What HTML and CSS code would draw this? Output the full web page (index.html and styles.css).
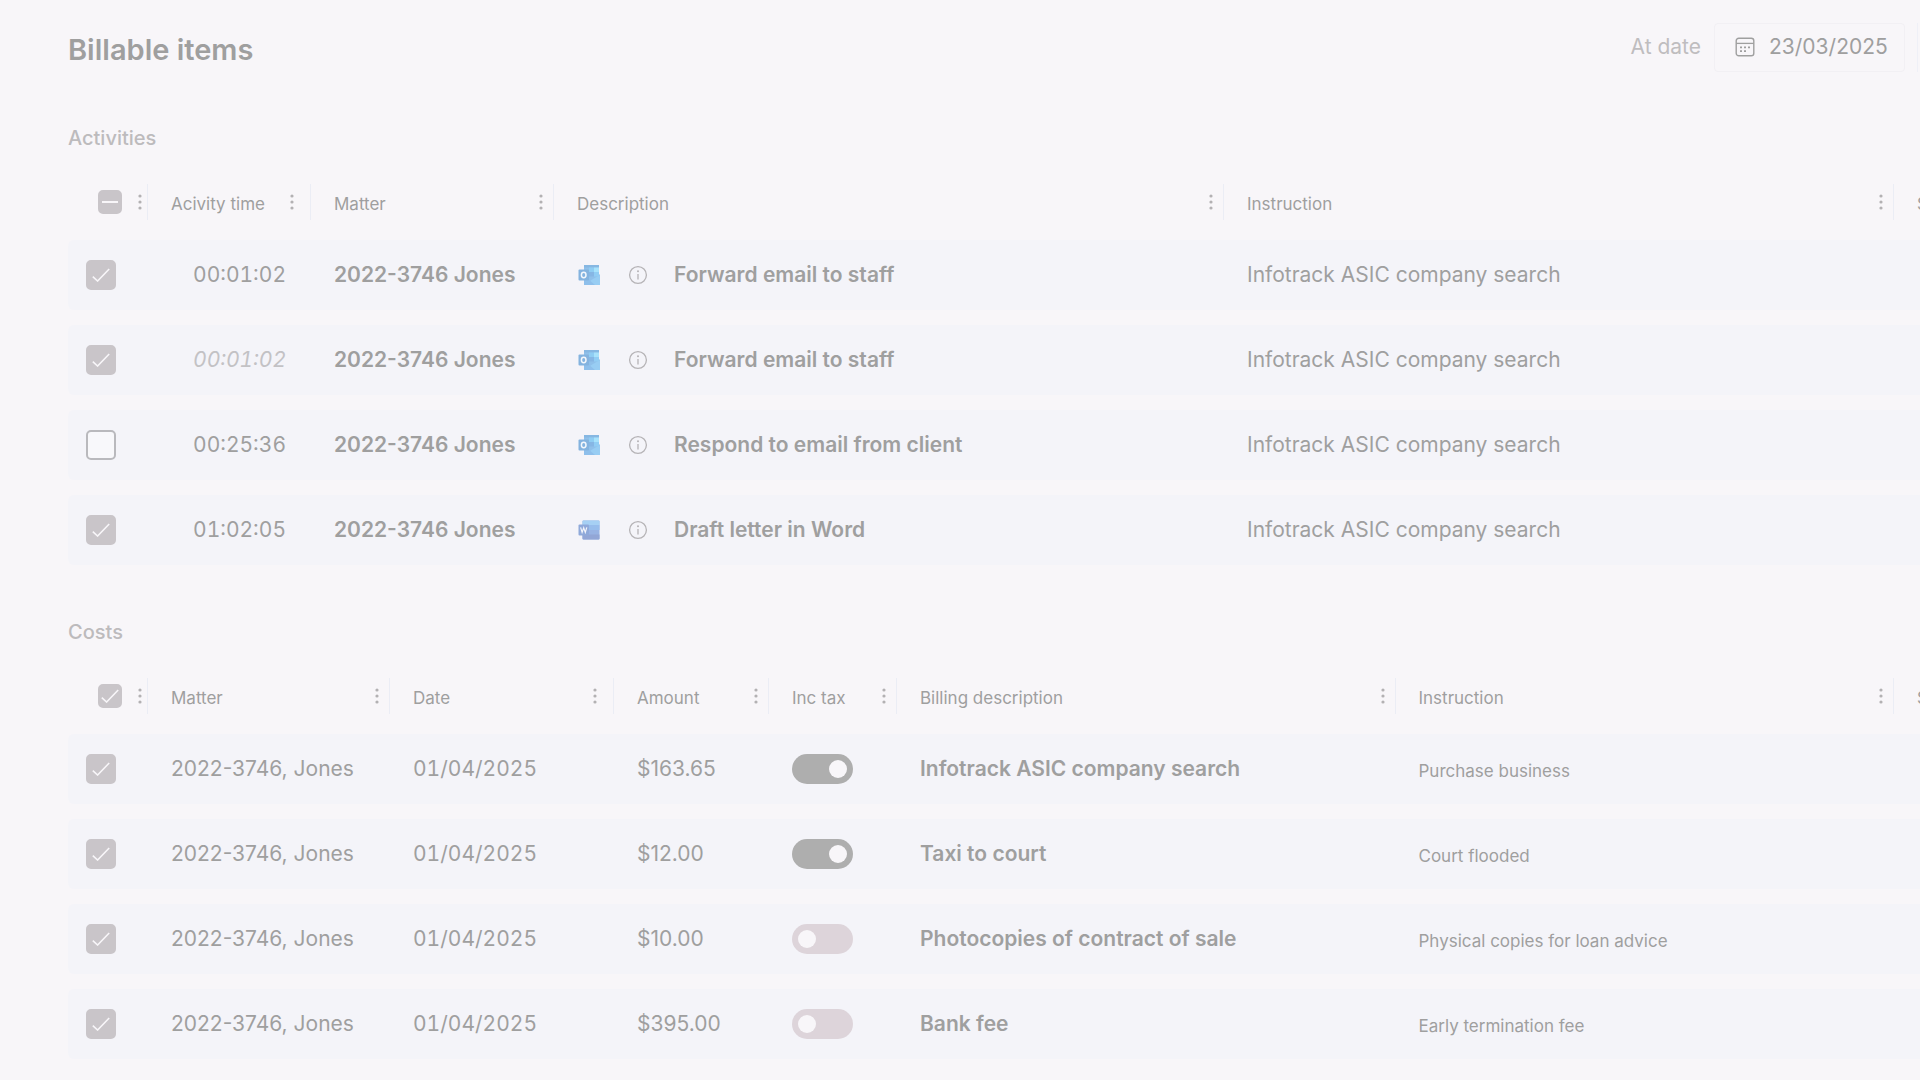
FILE: index.html
```html
<!DOCTYPE html>
<html lang="en">
<head>
    <meta charset="UTF-8">
    <meta name="viewport" content="width=device-width, initial-scale=1.0">
    <title>Billable items</title>
    <link rel="stylesheet" href="styles.css">
</head>
<body>
    <!-- Shared icons -->
    <svg class="sprite" aria-hidden="true">
        <symbol id="icon-kebab" viewBox="0 0 8 18">
            <circle cx="4" cy="3" r="1.6" fill="currentColor"/>
            <circle cx="4" cy="9" r="1.6" fill="currentColor"/>
            <circle cx="4" cy="15" r="1.6" fill="currentColor"/>
        </symbol>
        <symbol id="icon-info" viewBox="0 0 20 20">
            <circle cx="10" cy="10" r="8.4" fill="none" stroke="currentColor" stroke-width="1.3"/>
            <circle cx="10" cy="6.2" r="1" fill="currentColor"/>
            <path d="M10 9v5.4" stroke="currentColor" stroke-width="1.3"/>
        </symbol>
        <symbol id="icon-outlook" viewBox="0 0 22 20">
            <path d="M6 0h15v9l1 1v10H6z" fill="#8fc0ea"/>
            <path d="M6 0h15v2.5H6z" fill="#86b7e2"/>
            <path d="M11 2.5h5v4.5h-5z" fill="#8fcdf3"/>
            <path d="M16 2.5h5v4.5h-5z" fill="#a8e2fb"/>
            <path d="M11 7h5v4.5h-5z" fill="#86b6e4"/>
            <path d="M16 7h5v4.5h-5z" fill="#91cdf4"/>
            <path d="M22 10v10H6l9-6z" fill="#98cdf3"/>
            <path d="M6 10.5l11 9.5H6z" fill="#8ebfeb"/>
            <rect x="0.5" y="4.5" width="10.5" height="11" rx="1" fill="#84b3df"/>
            <ellipse cx="5.7" cy="10" rx="2.3" ry="2.7" fill="none" stroke="#f3f7fc" stroke-width="1.5"/>
        </symbol>
        <symbol id="icon-word" viewBox="0 0 22 20">
            <rect x="4.5" y="0.5" width="17" height="19" rx="1" fill="#98b3e3"/>
            <path d="M4.5 1.5a1 1 0 0 1 1-1h15a1 1 0 0 1 1 1V5h-17z" fill="#a6d0f4"/>
            <path d="M4.5 5h17v5h-17z" fill="#97bdec"/>
            <path d="M4.5 14.5h17v4a1 1 0 0 1-1 1h-15a1 1 0 0 1-1-1z" fill="#92a6d6"/>
            <rect x="0.5" y="4.5" width="10.5" height="11" rx="1" fill="#8fa9da"/>
            <path d="M2.6 7.4l1.5 5 1.6-4.6 1.6 4.6 1.5-5" fill="none" stroke="#f3f5fb" stroke-width="1.2"/>
        </symbol>
    </svg>

    <main class="page">
        <header class="page-header">
            <h1 class="page-title">Billable items</h1>
            <div class="toolbar">
                <label class="date-label" for="at-date">At date</label>
                <div class="date-field">
                    <svg class="icon-calendar" viewBox="0 0 20 20" aria-hidden="true">
                        <rect x="1.2" y="1.2" width="17.6" height="17.6" rx="2.6" fill="none" stroke="currentColor" stroke-width="1.4"/>
                        <path d="M1.2 6.4h17.6" stroke="currentColor" stroke-width="1.3"/>
                        <path d="M5 10.3h2M9 10.3h2M13 10.3h2M5 14.2h2M9 14.2h2" stroke="currentColor" stroke-width="1.8"/>
                    </svg>
                    <input class="date-input" id="at-date" type="text" value="23/03/2025">
                </div>
                <div class="toolbar-next"></div>
            </div>
        </header>

        <section>
            <h2 class="section-title">Activities</h2>
            <table class="grid">
                <colgroup>
                    <col class="w-select">
                    <col class="w-time">
                    <col class="w-act-matter">
                    <col>
                    <col>
                    <col class="w-last">
                </colgroup>
                <thead>
                    <tr>
                        <th><div class="head head-select"><input class="check check-small check-mixed" type="checkbox" aria-label="Select all activities"><button class="kebab" aria-label="Column menu"><svg><use href="#icon-kebab"/></svg></button></div></th>
                        <th><div class="head head-wide">Acivity time<button class="kebab" aria-label="Column menu"><svg><use href="#icon-kebab"/></svg></button></div></th>
                        <th><div class="head">Matter<button class="kebab" aria-label="Column menu"><svg><use href="#icon-kebab"/></svg></button></div></th>
                        <th><div class="head">Description<button class="kebab" aria-label="Column menu"><svg><use href="#icon-kebab"/></svg></button></div></th>
                        <th><div class="head">Instruction<button class="kebab" aria-label="Column menu"><svg><use href="#icon-kebab"/></svg></button></div></th>
                        <th><div class="head head-last">S</div></th>
                    </tr>
                </thead>
                <tbody>
                    <tr>
                        <td class="select"><input class="check" type="checkbox" aria-label="Select row" checked></td>
                        <td class="time">00:01:02</td>
                        <td class="strong">2022-3746 Jones</td>
                        <td class="strong"><div class="desc"><svg class="icon-app"><use href="#icon-outlook"/></svg><svg class="icon-info"><use href="#icon-info"/></svg>Forward email to staff</div></td>
                        <td>Infotrack ASIC company search</td>
                        <td></td>
                    </tr>
                    <tr>
                        <td class="select"><input class="check" type="checkbox" aria-label="Select row" checked></td>
                        <td class="time estimated">00:01:02</td>
                        <td class="strong">2022-3746 Jones</td>
                        <td class="strong"><div class="desc"><svg class="icon-app"><use href="#icon-outlook"/></svg><svg class="icon-info"><use href="#icon-info"/></svg>Forward email to staff</div></td>
                        <td>Infotrack ASIC company search</td>
                        <td></td>
                    </tr>
                    <tr>
                        <td class="select"><input class="check" type="checkbox" aria-label="Select row"></td>
                        <td class="time">00:25:36</td>
                        <td class="strong">2022-3746 Jones</td>
                        <td class="strong"><div class="desc"><svg class="icon-app"><use href="#icon-outlook"/></svg><svg class="icon-info"><use href="#icon-info"/></svg>Respond to email from client</div></td>
                        <td>Infotrack ASIC company search</td>
                        <td></td>
                    </tr>
                    <tr>
                        <td class="select"><input class="check" type="checkbox" aria-label="Select row" checked></td>
                        <td class="time">01:02:05</td>
                        <td class="strong">2022-3746 Jones</td>
                        <td class="strong"><div class="desc"><svg class="icon-app"><use href="#icon-word"/></svg><svg class="icon-info"><use href="#icon-info"/></svg>Draft letter in Word</div></td>
                        <td>Infotrack ASIC company search</td>
                        <td></td>
                    </tr>
                </tbody>
            </table>
        </section>

        <section>
            <h2 class="section-title">Costs</h2>
            <table class="grid">
                <colgroup>
                    <col class="w-select">
                    <col class="w-cost-matter">
                    <col class="w-date">
                    <col class="w-amount">
                    <col class="w-tax">
                    <col>
                    <col>
                    <col class="w-last">
                </colgroup>
                <thead>
                    <tr>
                        <th><div class="head head-select"><input class="check check-small" type="checkbox" aria-label="Select all costs" checked><button class="kebab" aria-label="Column menu"><svg><use href="#icon-kebab"/></svg></button></div></th>
                        <th><div class="head">Matter<button class="kebab" aria-label="Column menu"><svg><use href="#icon-kebab"/></svg></button></div></th>
                        <th><div class="head head-wide">Date<button class="kebab" aria-label="Column menu"><svg><use href="#icon-kebab"/></svg></button></div></th>
                        <th><div class="head">Amount<button class="kebab" aria-label="Column menu"><svg><use href="#icon-kebab"/></svg></button></div></th>
                        <th><div class="head">Inc tax<button class="kebab" aria-label="Column menu"><svg><use href="#icon-kebab"/></svg></button></div></th>
                        <th><div class="head">Billing description<button class="kebab" aria-label="Column menu"><svg><use href="#icon-kebab"/></svg></button></div></th>
                        <th><div class="head">Instruction<button class="kebab" aria-label="Column menu"><svg><use href="#icon-kebab"/></svg></button></div></th>
                        <th><div class="head head-last">S</div></th>
                    </tr>
                </thead>
                <tbody>
                    <tr>
                        <td class="select"><input class="check" type="checkbox" aria-label="Select row" checked></td>
                        <td>2022-3746, Jones</td>
                        <td class="date">01/04/2025</td>
                        <td>$163.65</td>
                        <td><input class="toggle" type="checkbox" aria-label="Inc tax" checked></td>
                        <td class="strong">Infotrack ASIC company search</td>
                        <td class="note">Purchase business</td>
                        <td></td>
                    </tr>
                    <tr>
                        <td class="select"><input class="check" type="checkbox" aria-label="Select row" checked></td>
                        <td>2022-3746, Jones</td>
                        <td class="date">01/04/2025</td>
                        <td>$12.00</td>
                        <td><input class="toggle" type="checkbox" aria-label="Inc tax" checked></td>
                        <td class="strong">Taxi to court</td>
                        <td class="note">Court flooded</td>
                        <td></td>
                    </tr>
                    <tr>
                        <td class="select"><input class="check" type="checkbox" aria-label="Select row" checked></td>
                        <td>2022-3746, Jones</td>
                        <td class="date">01/04/2025</td>
                        <td>$10.00</td>
                        <td><input class="toggle" type="checkbox" aria-label="Inc tax"></td>
                        <td class="strong">Photocopies of contract of sale</td>
                        <td class="note">Physical copies for loan advice</td>
                        <td></td>
                    </tr>
                    <tr>
                        <td class="select"><input class="check" type="checkbox" aria-label="Select row" checked></td>
                        <td>2022-3746, Jones</td>
                        <td class="date">01/04/2025</td>
                        <td>$395.00</td>
                        <td><input class="toggle" type="checkbox" aria-label="Inc tax"></td>
                        <td class="strong">Bank fee</td>
                        <td class="note">Early termination fee</td>
                        <td></td>
                    </tr>
                </tbody>
            </table>
        </section>
    </main>
</body>
</html>
```
FILE: styles.css
```css
* {
    box-sizing: border-box;
}

body {
    margin: 0;
    background: #f8f6f9;
    color: #9f9f9f;
    font-family: Inter, "Liberation Sans", sans-serif;
    font-size: 21px;
    line-height: 28px;
}

.sprite {
    display: none;
}

.page {
    padding-left: 68px;
    overflow: hidden;
}

/* Page header */
.page-header {
    display: flex;
    align-items: center;
    justify-content: space-between;
    height: 86px;
    padding-top: 8px;
}

.page-title {
    margin: 0;
    padding-top: 5px;
    font-size: 29px;
    font-weight: 600;
    line-height: 36px;
}

.toolbar {
    display: flex;
    align-items: center;
}

.date-label {
    margin-right: 13px;
    color: #bfbdbf;
}

.date-field {
    display: flex;
    align-items: center;
    gap: 14px;
    width: 191px;
    height: 49px;
    padding-left: 20px;
    border: 1px solid #f2f0f4;
    border-radius: 4px;
}

.icon-calendar {
    flex: none;
    width: 20px;
    height: 20px;
}

.date-input {
    width: 100%;
    min-width: 0;
    padding: 0;
    border: 0;
    background: none;
    color: inherit;
    font: inherit;
}

.toolbar-next {
    width: 3px;
    height: 49px;
    margin-left: 12px;
    border-left: 1px solid #eff0f7;
}

.section-title {
    margin: 0;
    padding: 38px 0 12px;
    color: #bdbbbd;
    font-size: 20px;
    font-weight: 500;
    line-height: 28px;
}

/* Tables */
.grid {
    width: 100%;
    table-layout: fixed;
    border-collapse: separate;
    border-spacing: 0 15px;
}

.w-select { width: 80px; }
.w-time { width: 163px; }
.w-act-matter { width: 243px; }
.w-cost-matter { width: 242px; }
.w-date { width: 224px; }
.w-amount { width: 155px; }
.w-tax { width: 128px; }
.w-last { width: 26px; }

.grid th {
    height: 46px;
    padding: 0;
    font-size: 17px;
    font-weight: 400;
    text-align: left;
}

.head {
    display: flex;
    align-items: center;
    justify-content: space-between;
    height: 36px;
    padding: 4px 8px 0 23px;
    border-right: 1px solid #ebedf5;
    white-space: nowrap;
}

/* controls stay centred on the divider, the label sits slightly lower */
.head > * {
    margin: 0 0 4px;
}

.head-select {
    padding-left: 30px;
    padding-right: 3px;
}

.head-wide {
    padding-right: 14px;
}

.head-last {
    border-right: 0;
    padding-right: 0;
    overflow: hidden;
}

.kebab {
    display: flex;
    padding: 0;
    border: 0;
    background: none;
    color: #b3b1b3;
}

.kebab svg {
    width: 8px;
    height: 18px;
}

.grid td {
    height: 70px;
    padding: 0 0 0 23px;
    background: #f4f4f9;
    white-space: nowrap;
}

.grid td:first-child {
    border-radius: 6px 0 0 6px;
}

.grid .select {
    padding-left: 18px;
}

.grid .time {
    padding: 0 25px 0 0;
    text-align: right;
}

.grid .time,
.grid .date {
    font-variant-numeric: tabular-nums;
}

.grid .estimated {
    color: #c3c2c5;
    font-style: italic;
}

.grid .strong {
    font-weight: 600;
}

.grid .note {
    padding-top: 3px;
    font-size: 17px;
}

.desc {
    display: flex;
    align-items: center;
}

.icon-app {
    width: 22px;
    height: 20px;
    margin: 0 28px 0 1px;
}

.icon-info {
    width: 20px;
    height: 20px;
    margin-right: 26px;
    color: #b5b3b6;
}

/* Checkboxes and toggles */
.check {
    display: block;
    appearance: none;
    width: 30px;
    height: 30px;
    margin: 0;
    border: 2px solid #b9b9bd;
    border-radius: 5px;
    background: #f8f8fb center / 18px 14px no-repeat;
}

.check-small {
    width: 24px;
    height: 24px;
    margin-bottom: 4px;
}

.check:checked,
.check-mixed {
    border-color: #c9c5c9;
    background-color: #c9c5c9;
}

.check:checked {
    background-image: url("data:image/svg+xml,%3Csvg xmlns='http://www.w3.org/2000/svg' viewBox='0 0 18 14'%3E%3Cpath d='M0.8 8.6l4.8 4.4L17.2 1' fill='none' stroke='%23f8f6f9' stroke-width='1.6'/%3E%3C/svg%3E");
}

.check-mixed {
    background-image: linear-gradient(#f8f6f9, #f8f6f9);
    background-size: 16px 2px;
}

.toggle {
    display: flex;
    align-items: center;
    appearance: none;
    width: 61px;
    height: 30px;
    margin: 0;
    padding: 0 6px;
    border-radius: 15px;
    background: #ddd4da;
}

.toggle::before {
    content: "";
    width: 18px;
    height: 18px;
    border-radius: 50%;
    background: #f8f6f9;
}

.toggle:checked {
    justify-content: flex-end;
    background: #aeaeae;
}
```
